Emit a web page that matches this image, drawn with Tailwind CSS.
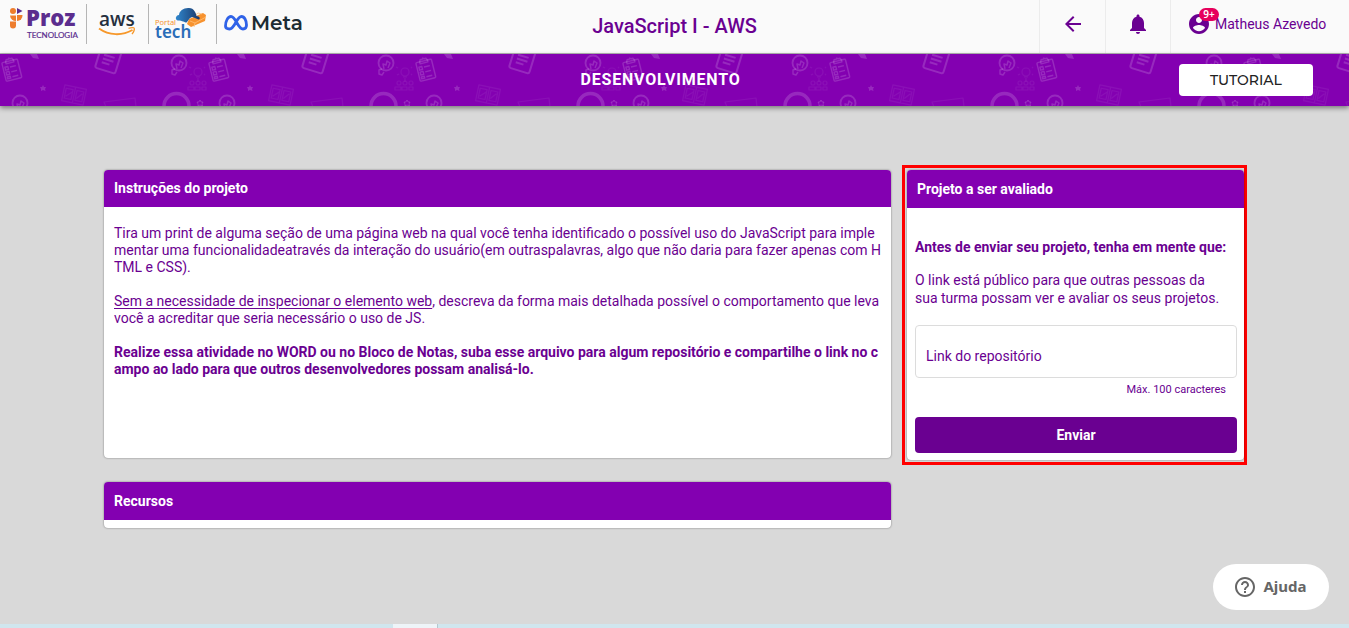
<!DOCTYPE html>
<html lang="pt-BR">
<head>
<meta charset="utf-8">
<meta name="viewport" content="width=device-width, initial-scale=1">
<title>JavaScript I - AWS</title>
<script src="https://cdn.jsdelivr.net/npm/@tailwindcss/browser@4"></script>
</head>
<body class="flex min-h-screen flex-col bg-[#d9d9d9] font-['Roboto',sans-serif] text-sm text-[#6a0091]">

<header class="grid h-[54px] grid-cols-[1fr_auto_1fr] border-b border-[#b5b5b5] bg-[#fafafa]">
  <div class="flex items-start pt-1">
    <a href="#" aria-label="Proz Tecnologia" class="border-r border-[#b5b5b5]">
      <svg class="h-10 w-[86px]" viewBox="0 4 86 40">
        <g fill="#ee7d2d"><circle cx="13" cy="11" r="3"/><path d="M10 15.500h6v5.500a6 6 0 0 1-6-5.500z"/><path d="M10 21.500h6v4a3 3 0 0 1-6 0z"/><path d="M17 15h5.500a5.500 5.500 0 0 1-5.500 6z"/></g>
        <path d="M17 8l5.500 3-5.500 3z" fill="#5b2d8e"/>
        <text x="26" y="26" font-family="Open Sans, sans-serif" font-weight="800" font-size="22" fill="#5b2d8e">Proz</text>
        <text x="27" y="38" font-family="Lato, sans-serif" font-size="8" fill="#5b2d8e" stroke="#5b2d8e" stroke-width=".2">TECNOLOGIA</text>
      </svg>
    </a>
    <a href="#" aria-label="AWS" class="border-r border-[#b5b5b5]">
      <svg class="h-10 w-[61px]" viewBox="87 4 61 40">
        <text x="99" y="26" font-family="Open Sans, sans-serif" font-weight="600" font-size="19" fill="#252f3e">aws</text>
        <path d="M99 28.500c10 7 23 7.500 33.500 1.500" fill="none" stroke="#f6982b" stroke-width="2"/>
        <path d="M128.500 28.300c3-1 5.500-.8 5.700-.2.300 1-.6 4-2.200 6" fill="none" stroke="#f6982b" stroke-width="1.300"/>
      </svg>
    </a>
    <a href="#" aria-label="Portal Tech" class="border-r border-[#b5b5b5]">
      <svg class="h-10 w-[67px]" viewBox="149 4 67 40">
        <defs><linearGradient id="cloud" x1="0" x2="1"><stop offset="0" stop-color="#2f86cd"/><stop offset="1" stop-color="#1b3768"/></linearGradient></defs>
        <path d="M189 19l14-6 3 2-1 6-14 6-4-3z" fill="#f7922e"/>
        <path d="M190 21l5 2 11-6M195 23l-1 4M193 17l5-4 4 1" fill="none" stroke="#ffc078" stroke-width=".8"/>
        <path d="M178 20.500c-3-.3-3-5 1-5.500 0-4 5-7.500 10-7 5 0 7 5 7.500 8 3 0 4.500 3 2 3.500l-6-2.500c-3 0-4 4-6 5.500-2 0-4-2-8.500-2z" fill="url(#cloud)"/>
        <text x="155" y="25" font-family="Noto Sans, sans-serif" font-size="7.500" fill="#f7922e">Portal</text>
        <text x="155" y="38" font-family="Noto Sans, sans-serif" font-weight="600" font-size="17" fill="#2a6db8">tech</text>
      </svg>
    </a>
    <a href="#" aria-label="Meta">
      <svg class="h-10 w-[90px]" viewBox="217 4 90 40">
        <path d="M225.500 26c0-5 2.500-9.500 5.500-9.500 5 0 6.500 12.500 12 12.500 2.300 0 3.500-1.500 3.500-4 0-4.500-2.200-8.500-5-8.500-5 0-6.500 12.500-12 12.500-2.500 0-4-1-4-3z" fill="none" stroke="#2f62e8" stroke-width="2.800"/>
        <text x="251" y="30" font-family="Montserrat, Inter, sans-serif" font-weight="600" font-size="20" fill="#1c2b33">Meta</text>
      </svg>
    </a>
  </div>
  <h1 class="self-center pb-[2px] text-xl font-medium">JavaScript I - AWS</h1>
  <nav class="flex justify-end" aria-label="Conta">
    <button type="button" aria-label="Voltar" class="flex w-[66px] items-center justify-center border-l border-[#ececec] pb-[6px]">
      <svg class="size-6" viewBox="0 0 24 24" fill="currentColor"><path d="M20 11H7.830l5.590-5.590L12 4l-8 8 8 8 1.410-1.410L7.830 13H20z"/></svg>
    </button>
    <button type="button" aria-label="Notificações" class="flex w-[65px] items-center justify-center border-l border-[#ececec] pb-[6px]">
      <svg class="size-6" viewBox="0 0 24 24" fill="currentColor"><path d="M12 22c1.100 0 2-.9 2-2h-4c0 1.100.89 2 2 2zm6-6v-5c0-3.070-1.640-5.640-4.500-6.320V4c0-.83-.67-1.500-1.500-1.500s-1.500.67-1.500 1.500v.68C7.630 5.360 6 7.920 6 11v5l-2 2v1h16v-1z"/></svg>
    </button>
    <button type="button" class="flex w-[179px] items-center gap-1 border-l border-[#ececec] pb-[6px] pl-4">
      <span class="relative">
        <svg class="size-6" viewBox="0 0 24 24" fill="currentColor"><path d="M12 2C6.480 2 2 6.480 2 12s4.480 10 10 10 10-4.480 10-10S17.520 2 12 2zm0 3c1.660 0 3 1.340 3 3s-1.340 3-3 3-3-1.340-3-3 1.340-3 3-3zm0 14.200c-2.500 0-4.710-1.280-6-3.220.03-1.990 4-3.080 6-3.080 1.990 0 5.970 1.090 6 3.080-1.290 1.940-3.500 3.220-6 3.220z"/></svg>
        <span class="absolute -top-1 left-3 flex h-[13px] w-5 items-center justify-center rounded-full bg-[#e6005c] font-['Noto_Sans',sans-serif] text-[10px] font-semibold text-white">9+</span>
      </span>
      <span>Matheus Azevedo</span>
    </button>
  </nav>
</header>

<section class="relative grid h-[52px] grid-cols-[1fr_auto_1fr] items-center bg-[#8300b1] pr-9 pl-2 text-white shadow-[0_2px_5px_rgba(0,0,0,0.45)]">
  <svg class="absolute inset-0 h-full w-full" aria-hidden="true">
    <defs>
      <pattern id="school" width="207" height="52" patternUnits="userSpaceOnUse">
        <g fill="none" stroke="#fff" stroke-opacity=".16" stroke-width="1.400" stroke-linejoin="round">
          <g transform="translate(11.700 15.700) rotate(-14)">
            <rect x="-8" y="-9" width="16" height="19" rx="1"/><path d="M-4-9l1-2h2l1-1 1 1h2l1 2v2h-8z"/>
            <path d="M-6-4h3v3h-3zM-6 1h3v3h-3zM-6 6h3v2h-3zM-1-3h6M-1 2h6M-1 7h6"/>
          </g>
          <path d="M30 0l3 4 6 1-2-5" fill="#fff" fill-opacity=".16" stroke="none"/>
          <g transform="translate(108 5) rotate(17)"><rect x="-10" y="-14" width="21" height="26" rx="2" stroke-width="2"/><path d="M-5-3H6M-5 1H6M-5 5H3" stroke-width="2"/></g>
          <g id="bulb"><circle cx="179" cy="9" r="7.500" stroke-width="1.800"/><path d="M175 15l-3 1v4l3 1 2-3M177 15l-1-5 3 1 1-4 3 2-2 5"/></g>
          <use href="#bulb" x="-159" y="40"/>
          <path d="M43 31l1 2h2l-1 2 .5 2-2.500-1-2 1v-2l-1-2h2z" fill="#fff" fill-opacity=".16" stroke="none"/>
          <path d="M200 46l1 2h2l-1 2 .5 2-2.500-1-2 1v-2l-1-2h2z" stroke-width="1"/>
          <circle cx="176.500" cy="52" r="12.500" stroke-width="3.500"/>
          <g stroke-opacity=".06" stroke-width="1.200">
            <circle cx="198" cy="18" r="4"/><path d="M196 23h4M198 24v4M191 14l-2-1M192 20l-2 1M204 14l1-1M204 20l1 1"/>
            <circle cx="192" cy="29" r="2"/><circle cx="198" cy="29" r="2"/><circle cx="204" cy="29" r="2"/>
            <path d="M188 36v-3h6v3zM195 36v-3h5v3zM202 36v-3h4v3z"/>
            <g transform="translate(74 41) rotate(12)"><path d="M-11-8H11V8H-11zM0-8V8M-9-5h7v10h-7zM2-5h7v10H2zM-8 3l6-6M3 3l5-6"/></g>
            <path d="M106 53l-2-5 31-4 1 9"/>
          </g>
        </g>
      </pattern>
    </defs>
    <rect width="100%" height="100%" fill="url(#school)"/>
  </svg>
  <h2 class="relative col-start-2 text-base font-bold tracking-wider">DESENVOLVIMENTO</h2>
  <button type="button" class="relative h-8 w-[134px] justify-self-end rounded bg-white font-['Montserrat','Inter',sans-serif] text-sm font-medium text-[#222]">TUTORIAL</button>
</section>

<main class="flex flex-1 items-start gap-[11px] pt-[59px] pr-[102px] pl-[104px]">
  <div class="flex min-w-0 flex-1 flex-col gap-6 pt-[5px]">
    <section class="min-h-[288px] overflow-hidden rounded bg-white shadow-[0_0_2px_rgba(0,0,0,0.5)]">
      <h3 class="bg-[#8300b1] px-[10px] pt-2 pb-[9px] leading-5 font-bold text-white">Instruções do projeto</h3>
      <div class="flex flex-col gap-[17px] pt-[18px] pr-1 pl-[10px] leading-[17px]">
        <p>Tira um print de alguma seção de uma página web na qual você tenha identificado o possível uso do JavaScript para imple<br>mentar uma funcionalidadeatravés da interação do usuário(em outraspalavras, algo que não daria para fazer apenas com H<br>TML e CSS).</p>
        <p><u class="underline-offset-2">Sem a necessidade de inspecionar o elemento web</u>, descreva da forma mais detalhada possível o comportamento que leva<br>você a acreditar que seria necessário o uso de JS.</p>
        <p class="font-bold">Realize essa atividade no WORD ou no Bloco de Notas, suba esse arquivo para algum repositório e compartilhe o link no c<br>ampo ao lado para que outros desenvolvedores possam analisá-lo.</p>
      </div>
    </section>
    <section class="overflow-hidden rounded bg-white pb-2 shadow-[0_0_2px_rgba(0,0,0,0.5)]">
      <h3 class="bg-[#8300b1] px-[10px] py-[9px] leading-5 font-bold text-white">Recursos</h3>
    </section>
  </div>

  <div class="w-[345px] border-3 border-[#ff0000] pt-[2px] pb-[2px] pl-[2px]">
    <form class="overflow-hidden rounded bg-white shadow-[0_0_2px_rgba(0,0,0,0.5)]">
      <h3 class="bg-[#8300b1] px-[10px] py-[9px] leading-5 font-bold text-white">Projeto a ser avaliado</h3>
      <div class="flex flex-col pt-[30px] pr-[7px] pb-[7px] pl-2">
        <p class="font-bold whitespace-nowrap leading-[18px]">Antes de enviar seu projeto, tenha em mente que:</p>
        <p class="mt-[15px] leading-[18px]">O link está público para que outras pessoas da<br>sua turma possam ver e avaliar os seus projetos.</p>
        <input type="text" maxlength="100" aria-label="Link do repositório" placeholder="Link do repositório" class="mt-[18px] h-[53px] rounded border border-[#dcdcdc] px-[10px] pt-2 placeholder:text-[#6a0091]">
        <p class="mt-1 pr-[11px] text-right text-[11px] leading-4">Máx. 100 caracteres</p>
        <button type="submit" class="mt-[19px] h-9 rounded bg-[#6a0091] font-bold text-white">Enviar</button>
      </div>
    </form>
  </div>
</main>

<footer class="flex h-1 bg-[#d0e6ee]" aria-hidden="true">
  <span class="ml-[393px] w-[45px] border-r border-[#b5c8d0] bg-[#eef4f8]"></span>
</footer>

<button type="button" class="fixed right-5 bottom-[18px] flex h-[46px] w-[116px] items-center justify-center gap-[6px] rounded-full bg-white pr-[2px] font-['Noto_Sans',sans-serif] text-[15px] font-bold text-[#666]">
  <svg class="size-6" viewBox="0 0 24 24" fill="currentColor" aria-hidden="true"><path d="M11 18h2v-2h-2v2zm1-16C6.480 2 2 6.480 2 12s4.480 10 10 10 10-4.480 10-10S17.520 2 12 2zm0 18c-4.410 0-8-3.590-8-8s3.590-8 8-8 8 3.590 8 8-3.590 8-8 8zm0-14c-2.210 0-4 1.790-4 4h2c0-1.100.9-2 2-2s2 .9 2 2c0 2-3 1.750-3 5h2c0-2.250 3-2.500 3-5 0-2.210-1.790-4-4-4z"/></svg>
  <span>Ajuda</span>
</button>
</body>
</html>
